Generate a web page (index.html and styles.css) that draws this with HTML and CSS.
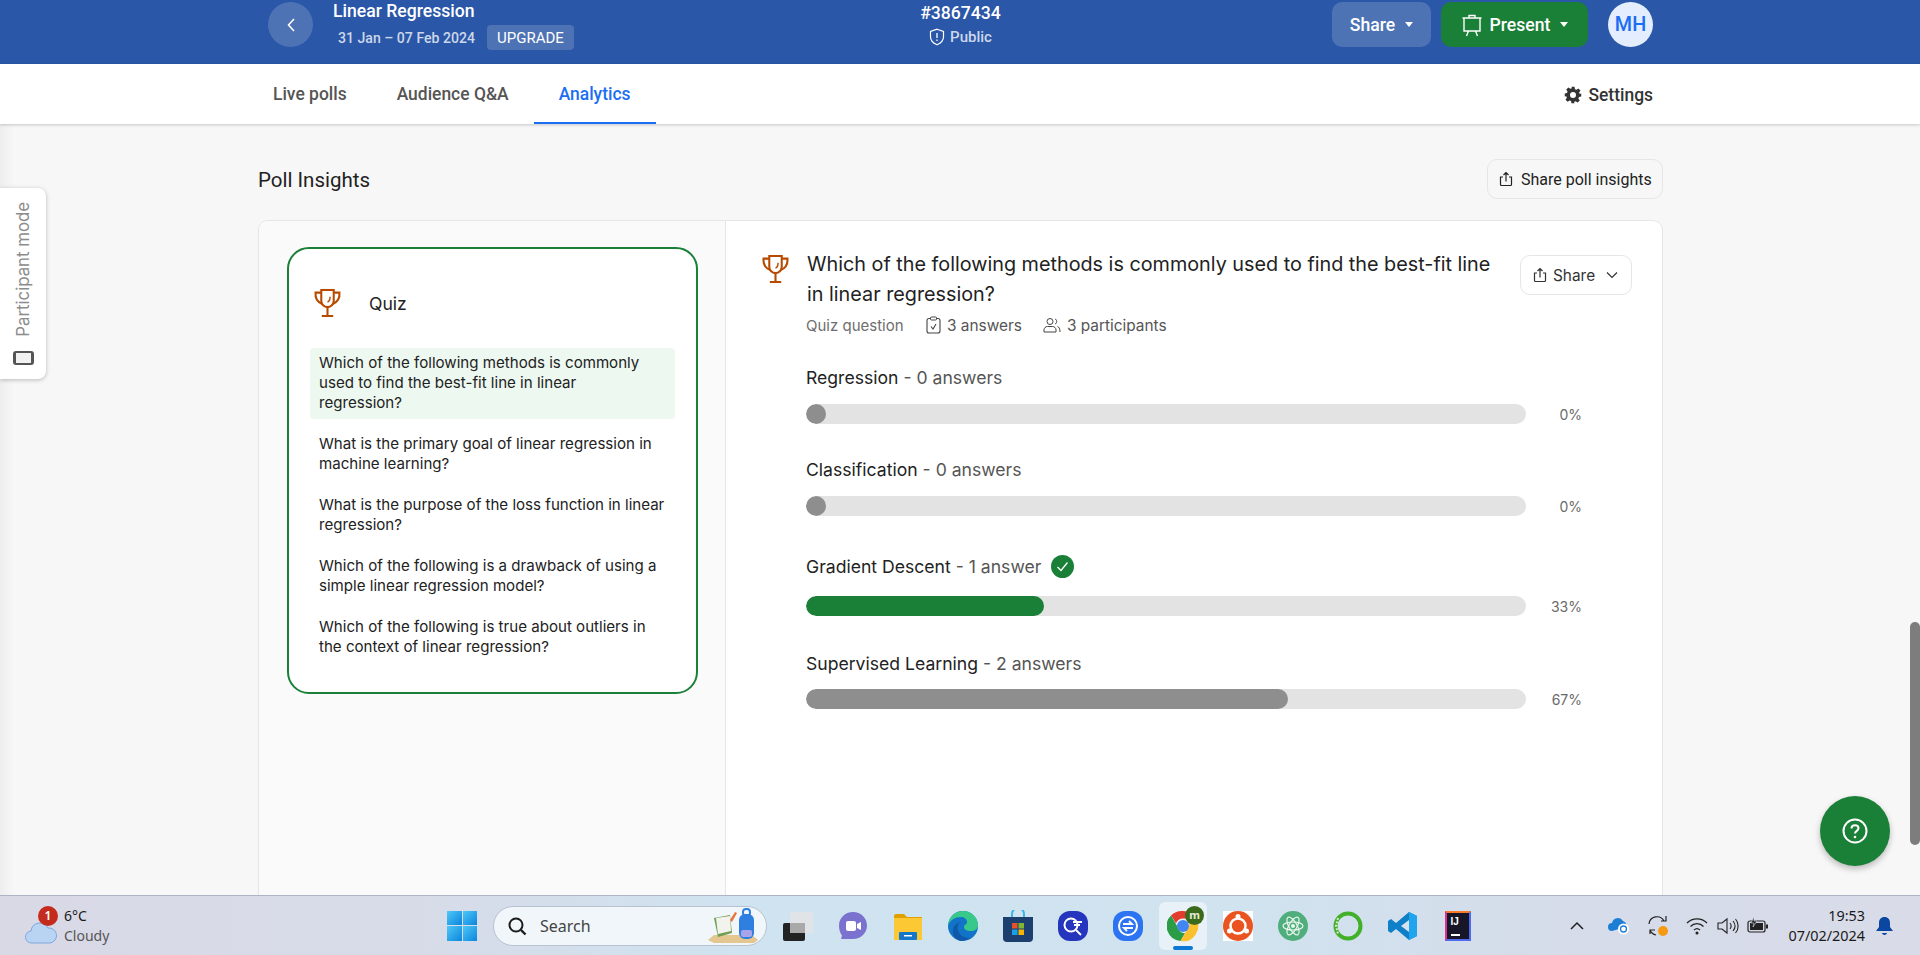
FILE: index.html
```html
<!DOCTYPE html>
<html lang="en">
<head>
  <meta charset="UTF-8">
  <meta name="viewport" content="width=device-width, initial-scale=1.0">
  <title>Linear Regression - Analytics</title>
  <link rel="stylesheet" href="styles.css">
</head>
<body>

  <!-- Icons used more than once -->
  <svg class="sprites" width="0" height="0">
    <symbol id="i-trophy" viewBox="3 2.500 26 27">
      <path d="M10 3.500h12V14a6 6 0 0 1-12 0z" fill="none" stroke="currentColor" stroke-width="2"/>
      <path d="M10 6H4.500c-.5 5 1.500 9 6.500 11M22 6h5.500c.5 5-1.500 9-6.500 11" fill="none" stroke="currentColor" stroke-width="2"/>
      <path d="M16 20v8M10.500 28.500h11" fill="none" stroke="currentColor" stroke-width="2"/>
      <path d="M18.500 10c0 3-.8 4.500-2.500 5" fill="none" stroke="currentColor" stroke-width="1.400"/>
    </symbol>
    <symbol id="i-share" viewBox="0 0 16 16">
      <path d="M5 6H2.500v7.500a1 1 0 0 0 1 1h9a1 1 0 0 0 1-1V6H11M8 10.500V1.500M5.500 4 8 1.500 10.500 4" fill="none" stroke="currentColor" stroke-width="1.200"/>
    </symbol>
  </svg>

  <!-- Top bar -->
  <header class="topbar">
    <div class="topbar-left">
      <button class="back-btn">
        <svg width="12" height="18" viewBox="0 0 12 18"><path d="M9 3 3.500 9 9 15" fill="none" stroke="#fff" stroke-width="1.600"/></svg>
      </button>
      <div class="event-info">
        <div class="event-title">Linear Regression</div>
        <div class="event-dates">
          <span>31 Jan – 07 Feb 2024</span>
          <span class="upgrade">UPGRADE</span>
        </div>
      </div>
    </div>
    <div class="topbar-center">
      <div class="event-code">#3867434</div>
      <div class="event-public">
        <svg width="16" height="18" viewBox="0 0 16 18"><path d="M8 1.200 14.500 3.500V9c0 3.500-2.500 6-6.500 7.800C4 15 1.500 12.500 1.500 9V3.500z" fill="none" stroke="#fff" stroke-width="1.200"/><path d="M8 5v5M8 11.500v1.500" stroke="#fff" stroke-width="1.300"/></svg>
        <span>Public</span>
      </div>
    </div>
    <div class="topbar-right">
      <button class="btn-share">Share <i class="caret"></i></button>
      <button class="btn-present">
        <svg width="22" height="24" viewBox="0 0 22 24"><path d="M3 5h16v13H3zM8 5V2.500h6V5M7.500 18 5.500 23M14.500 18l2 5M1.500 5h19" fill="none" stroke="#fff" stroke-width="1.400"/></svg>
        Present <i class="caret"></i>
      </button>
      <div class="avatar">MH</div>
    </div>
  </header>

  <!-- Tabs -->
  <nav class="tabs">
    <a class="tab">Live polls</a>
    <a class="tab">Audience Q&amp;A</a>
    <a class="tab active">Analytics</a>
    <a class="settings">
      <svg width="18" height="18" viewBox="0 0 24 24"><path fill="#333" fill-rule="evenodd" d="M10 1h4l.6 3.200 1.900.8 2.700-1.800 2.800 2.800-1.800 2.700.8 1.900L23 10v4l-3 .6-.8 1.900 1.800 2.700-2.800 2.800-2.700-1.800-1.900.8L13.900 23h-4l-.5-3-1.900-.8-2.700 1.800L2 18.200l1.800-2.700-.8-1.900L1 14v-4l3-.6.8-1.900L3 4.800 5.800 2l2.700 1.800 1.900-.8zM12 8a4 4 0 1 0 0 8 4 4 0 0 0 0-8z"/></svg>
      Settings
    </a>
  </nav>

  <!-- Main content -->
  <main class="content">
    <div class="content-head">
      <h2>Poll Insights</h2>
      <button class="btn-outline btn-insights">
        <svg width="16" height="16"><use href="#i-share"/></svg>
        Share poll insights
      </button>
    </div>

    <div class="card">
      <aside class="side">
        <div class="quiz-box">
          <div class="quiz-head">
            <svg class="trophy" width="29" height="28"><use href="#i-trophy"/></svg>
            <span>Quiz</span>
          </div>
          <ul class="quiz-list">
            <li class="selected">Which of the following methods is commonly used to find the best-fit line in linear regression?</li>
            <li>What is the primary goal of linear regression in machine learning?</li>
            <li>What is the purpose of the loss function in linear regression?</li>
            <li>Which of the following is a drawback of using a simple linear regression model?</li>
            <li>Which of the following is true about outliers in the context of linear regression?</li>
          </ul>
        </div>
      </aside>

      <section class="detail">
        <div class="question-row">
          <svg class="trophy" width="29" height="28"><use href="#i-trophy"/></svg>
          <h3>Which of the following methods is commonly used to find the best-fit line in linear regression?</h3>
          <button class="btn-outline btn-share-small">
            <svg width="16" height="16"><use href="#i-share"/></svg>
            Share
            <svg width="12" height="8" viewBox="0 0 12 8"><path d="M1 1.500 6 6.500 11 1.500" fill="none" stroke="#333" stroke-width="1.200"/></svg>
          </button>
        </div>
        <div class="meta">
          <span class="meta-type">Quiz question</span>
          <span class="meta-item">
            <svg width="15" height="18" viewBox="0 0 15 18"><rect x="1" y="2.500" width="13" height="14.500" rx="2" fill="none" stroke="#444" stroke-width="1.100"/><rect x="4.500" y="1" width="6" height="3" rx="1" fill="#fff" stroke="#444"/><path d="M5 10.500 7 13l3-5" fill="none" stroke="#444" stroke-width="1.100"/></svg>
            3 answers
          </span>
          <span class="meta-item meta-people">
            <svg width="18" height="16" viewBox="0 0 18 16"><circle cx="7" cy="4.500" r="3" fill="none" stroke="#444"/><path d="M1 15v-2c0-2 1.500-3.500 3.500-3.500h5c2 0 3.500 1.500 3.500 3.500v2zM12 2c2 .3 2.500 4.500 0 5M14.500 9.500c1.500.5 2.500 2 2.500 5.500" fill="none" stroke="#444"/></svg>
            3 participants
          </span>
        </div>

        <div class="option">
          <div class="option-label"><span><b>Regression</b> - 0 answers</span></div>
          <div class="option-row">
            <div class="bar"><div class="fill fill-grey fill-zero"></div></div>
            <span class="pct">0%</span>
          </div>
        </div>
        <div class="option">
          <div class="option-label"><span><b>Classification</b> - 0 answers</span></div>
          <div class="option-row">
            <div class="bar"><div class="fill fill-grey fill-zero"></div></div>
            <span class="pct">0%</span>
          </div>
        </div>
        <div class="option option-correct">
          <div class="option-label">
            <span><b>Gradient Descent</b> - 1 answer</span>
            <svg class="check" width="23" height="23" viewBox="0 0 23 23"><circle cx="11.500" cy="11.500" r="11.500" fill="#1a7f37"/><path d="M6.500 12 10 15.500 16.500 7.500" fill="none" stroke="#fff" stroke-width="1.300"/></svg>
          </div>
          <div class="option-row">
            <div class="bar"><div class="fill fill-green" style="width: 33%"></div></div>
            <span class="pct">33%</span>
          </div>
        </div>
        <div class="option">
          <div class="option-label"><span><b>Supervised Learning</b> - 2 answers</span></div>
          <div class="option-row">
            <div class="bar"><div class="fill fill-grey" style="width: 67%"></div></div>
            <span class="pct">67%</span>
          </div>
        </div>
      </section>
    </div>
  </main>

  <!-- Floating bits -->
  <div class="participant-tab">
    <span>Participant mode</span>
    <i class="participant-icon"></i>
  </div>
  <button class="help-fab">
    <svg width="28" height="28" viewBox="0 0 28 28"><circle cx="14" cy="14" r="11.500" fill="none" stroke="#fff" stroke-width="2"/><path d="M10.500 11.500c0-2 1.500-3.200 3.500-3.200s3.500 1.200 3.500 3c0 2.700-3.500 2.500-3.500 5.200" fill="none" stroke="#fff" stroke-width="2"/><circle cx="14" cy="20" r="1.300" fill="#fff"/></svg>
  </button>
  <div class="scroll-thumb"></div>

  <!-- Windows taskbar -->
  <footer class="taskbar">
    <div class="weather">
      <div class="weather-icon">
        <svg width="32" height="28" viewBox="0 0 32 28"><path d="M7 27a6 6 0 0 1-1-12 9 9 0 0 1 17-3 7.500 7.500 0 0 1 2 15z" fill="#b9d3f2" stroke="#7fa6dc"/></svg>
        <span class="weather-badge">1</span>
      </div>
      <div class="weather-text">
        <div>6°C</div>
        <div class="weather-sub">Cloudy</div>
      </div>
    </div>

    <div class="start">
      <i></i><i></i><i></i><i></i>
    </div>

    <div class="task-search">
      <svg width="22" height="22" viewBox="0 0 22 22"><circle cx="10" cy="10" r="6.500" fill="none" stroke="#1c1c1c" stroke-width="2"/><path d="M15 15l4.500 4.500" stroke="#1c1c1c" stroke-width="2.400"/></svg>
      <span>Search</span>
      <svg class="search-art" width="54" height="36" viewBox="0 0 54 36">
        <path d="M2 32 8 27h38l6 5-4 3H8z" fill="#e4c690"/>
        <path d="M8 10 24 7l2 18-14 4z" fill="#6f9e52"/>
        <path d="M10 10 24 8l1 15-13 3z" fill="#f3f3ee"/>
        <path d="M24 12l5-8 2 1-5 9z" fill="#e8763a"/>
        <rect x="33" y="6" width="15" height="25" rx="6" fill="#2f7fe0"/>
        <rect x="37" y="1" width="7" height="7" rx="3" fill="none" stroke="#2f7fe0" stroke-width="2"/>
        <rect x="35" y="22" width="11" height="7" rx="2" fill="#a7a4ec"/>
      </svg>
    </div>

    <div class="pinned">
      <div class="pin">
        <svg width="32" height="30" viewBox="0 0 32 30"><rect x="1" y="12" width="22" height="18" rx="2" fill="#222"/><rect x="8" y="1" width="23" height="21" rx="2" fill="#e4e4e4" fill-opacity=".85"/><rect x="8" y="12" width="15" height="10" fill="#a9a9a9"/></svg>
      </div>
      <div class="pin">
        <svg width="30" height="30" viewBox="0 0 30 30"><path d="M15 1c8 0 14 6 14 13.500S23 28 15 28H3l1-3.500C2 22 1 18.500 1 14.500 1 7 7 1 15 1z" fill="#7b72d0"/><rect x="8" y="10" width="10" height="10" rx="2" fill="#fff"/><path d="M19 13l4-2v8l-4-2z" fill="#fff"/></svg>
      </div>
      <div class="pin">
        <svg width="30" height="30" viewBox="0 0 30 30"><path d="M1 5a2 2 0 0 1 2-2h8l3 3h15v4H1z" fill="#e0a100"/><path d="M1 7h28v22H1z" fill="#fcc934"/><rect x="6" y="21" width="18" height="8" rx="1" fill="#1477c9"/><rect x="11" y="24" width="8" height="1.500" fill="#fff"/></svg>
      </div>
      <div class="pin">
        <svg width="32" height="32" viewBox="0 0 32 32"><circle cx="16" cy="16" r="15" fill="#1273c8"/><path d="M1 16C2 6 9 1 16 1c9 0 15 7 15 14 0 4-3 6-7 6-5 0-7-2-7-4 0-3 3-2 3-5 0-3-3-5-6-5C8 7 3 10 1 16z" fill="#38c88a"/><path d="M14 31c-6-1-9-6-8-12 1-4 5-7 8-7-3 1-4 4-3 8 1 5 6 8 12 8-3 2-6 3-9 3z" fill="#0f5aa8"/></svg>
      </div>
      <div class="pin">
        <svg width="30" height="32" viewBox="0 0 30 32"><path d="M9 8V4a6 6 0 0 1 12 0v4" fill="none" stroke="#3ab4ee" stroke-width="2"/><path d="M0 7h30v21a4 4 0 0 1-4 4H4a4 4 0 0 1-4-4z" fill="#1d3f70"/><rect x="9" y="13" width="5.500" height="5.500" fill="#e8502a"/><rect x="15.500" y="13" width="5.500" height="5.500" fill="#7cb82f"/><rect x="9" y="19.500" width="5.500" height="5.500" fill="#1a9fe8"/><rect x="15.500" y="19.500" width="5.500" height="5.500" fill="#f4b400"/></svg>
      </div>
      <div class="pin">
        <div class="squircle squircle-indigo">
          <svg width="22" height="22" viewBox="0 0 22 22"><circle cx="9" cy="10" r="6.500" fill="none" stroke="#fff" stroke-width="2"/><path d="M14 15l5 5M11 7h9M12 10h6" stroke="#fff" stroke-width="1.800"/></svg>
        </div>
      </div>
      <div class="pin">
        <div class="squircle squircle-blue">
          <svg width="22" height="22" viewBox="0 0 22 22"><circle cx="11" cy="11" r="9" fill="none" stroke="#fff" stroke-width="2"/><path d="M6 9h9l-3-3M16 13H7l3 3" fill="none" stroke="#fff" stroke-width="1.800"/></svg>
        </div>
      </div>
      <div class="pin pin-active">
        <svg width="32" height="32" viewBox="0 0 32 32">
          <path d="M16 1a15 15 0 0 1 13 7.500H16a7.500 7.500 0 0 0-7 4.800L4 5.500A15 15 0 0 1 16 1z" fill="#e33b2e"/>
          <path d="M4 5.500l6.500 11.300a7.500 7.500 0 0 0 7.500 6.500L13.500 31A15 15 0 0 1 4 5.500z" fill="#2a9d46"/>
          <path d="M29 8.500A15 15 0 0 1 13.500 31l6.500-11.300a7.500 7.500 0 0 0 0-11.200z" fill="#fbc02d"/>
          <circle cx="16" cy="16" r="6" fill="#4285f4"/>
        </svg>
        <span class="chrome-badge">m</span>
        <i class="pin-indicator"></i>
      </div>
      <div class="pin">
        <svg width="30" height="30" viewBox="0 0 30 30"><rect width="30" height="30" fill="#fff"/><circle cx="15" cy="15" r="15" fill="#e95420"/><circle cx="15" cy="15" r="7.500" fill="none" stroke="#fff" stroke-width="2.500"/><circle cx="15" cy="5.500" r="2.500" fill="#fff"/><circle cx="6.500" cy="20" r="2.500" fill="#fff"/><circle cx="23.500" cy="20" r="2.500" fill="#fff"/></svg>
      </div>
      <div class="pin">
        <svg width="30" height="30" viewBox="0 0 30 30"><circle cx="15" cy="15" r="15" fill="#4fae7b"/><g fill="none" stroke="#eaf6ee" stroke-width="1.200"><ellipse cx="15" cy="15" rx="10" ry="4" transform="rotate(60 15 15)"/><ellipse cx="15" cy="15" rx="10" ry="4" transform="rotate(-60 15 15)"/><ellipse cx="15" cy="15" rx="10" ry="4"/></g><circle cx="15" cy="15" r="2" fill="#eaf6ee"/></svg>
      </div>
      <div class="pin">
        <svg width="30" height="30" viewBox="0 0 30 30"><circle cx="15" cy="15" r="12.500" fill="none" stroke="#43b02a" stroke-width="4"/><path d="M5 7 3 15l2 8" fill="none" stroke="#d2e8cb" stroke-width="2" stroke-dasharray="2 1.500"/></svg>
      </div>
      <div class="pin">
        <svg width="30" height="30" viewBox="0 0 30 30"><path d="M21 1 29 5v20l-8 4L8 18l-5 4-3-2V10l3-2 5 4z" fill="#0f80c8"/><path d="M21 1 29 5v20l-8 4z" fill="#20a4ee"/><path d="M21 9 13 15l8 6z" fill="#d4e3ef"/></svg>
      </div>
      <div class="pin">
        <div class="ij-logo"><span class="ij-text">IJ</span><i></i></div>
      </div>
    </div>

    <div class="tray">
      <svg class="tray-chevron" width="16" height="10" viewBox="0 0 16 10"><path d="M2 8l6-6 6 6" fill="none" stroke="#222" stroke-width="1.500"/></svg>
      <svg class="tray-cloud" width="22" height="18" viewBox="0 0 22 18"><path d="M4 14a4 4 0 0 1 0-8 6 6 0 0 1 11-2 5 5 0 0 1 3 6z" fill="#1d7ed6"/><circle cx="15.500" cy="12" r="5.500" fill="#fff"/><circle cx="15.500" cy="12" r="3" fill="none" stroke="#1d7ed6" stroke-width="1.300"/></svg>
      <svg class="tray-sync" width="22" height="22" viewBox="0 0 22 22"><path d="M2 9a8 8 0 0 1 15-3M19 1v5h-5M3 19v-4h5M3 15a8 8 0 0 0 6 5" fill="none" stroke="#222" stroke-width="1.200"/><circle cx="16" cy="16" r="5" fill="#f59a12"/></svg>
      <svg class="tray-wifi" width="22" height="18" viewBox="0 0 22 18"><path d="M1 6a14 14 0 0 1 20 0M4.500 9.500a9 9 0 0 1 13 0M8 13a4.500 4.500 0 0 1 6 0" fill="none" stroke="#222" stroke-width="1.300"/><circle cx="11" cy="16" r="1.500" fill="#222"/></svg>
      <svg class="tray-sound" width="22" height="18" viewBox="0 0 22 18"><path d="M1 6h4l5-4v14l-5-4H1zM13 6c1.500 2 1.500 4 0 6M16 4c2.500 3 2.500 7 0 10M18.500 2c3.500 4 3.500 10 0 14" fill="none" stroke="#222" stroke-width="1.100"/></svg>
      <svg class="tray-battery" width="22" height="18" viewBox="0 0 22 18"><rect x="1" y="4" width="17" height="11" rx="2" fill="none" stroke="#222" stroke-width="1.200"/><rect x="3" y="6" width="13" height="7" fill="#222"/><rect x="19" y="7.500" width="2" height="4" fill="#222"/><path d="M7 0 4 6h3l-1 4 4-6H7z" fill="#222" stroke="#d9dce8" stroke-width=".6"/></svg>
      <div class="clock">
        <div>19:53</div>
        <div>07/02/2024</div>
      </div>
      <svg class="tray-bell" width="17" height="20" viewBox="0 0 17 20"><path d="M8.500 1C12 1 14 3.500 14 7v4l3 4H0l3-4V7c0-3.500 2-6 5.500-6z" fill="#0b46a0"/><path d="M6 17h5c-.5 2.500-4.500 2.500-5 0z" fill="#0b46a0"/></svg>
    </div>
  </footer>

</body>
</html>
```

FILE: styles.css
```css
* {
  box-sizing: border-box;
}

html, body {
  height: 100%;
}

body {
  margin: 0;
  height: 955px;
  overflow: hidden;
  display: flex;
  flex-direction: column;
  font-family: Inter, "Noto Sans", sans-serif;
  background-color: #f7f7f7;
  color: #222;
}

button {
  font-family: inherit;
  border: none;
  cursor: pointer;
}

.sprites {
  position: absolute;
}

/* Top bar */
.topbar {
  flex: none;
  height: 64px;
  padding: 2px 267px 0 268px;
  display: grid;
  grid-template-columns: 1fr auto 1fr;
  align-items: start;
  background-color: #2a57a7;
  color: #fff;
  font-family: Roboto, sans-serif;
}

.topbar-left {
  display: flex;
}

.back-btn {
  width: 45px;
  height: 45px;
  border-radius: 50%;
  background-color: rgba(255, 255, 255, 0.17);
  display: flex;
  align-items: center;
  justify-content: center;
}

.event-info {
  margin-left: 20px;
}

.event-title {
  font-size: 17.600px;
  font-weight: 500;
  line-height: 18px;
}

.event-dates {
  display: flex;
  align-items: center;
  gap: 12px;
  margin-top: 5px;
  margin-left: 5px;
  font-size: 14.100px;
  font-weight: 500;
  color: #cdd7ea;
}

.upgrade {
  height: 25px;
  padding: 0 10px;
  display: flex;
  align-items: center;
  border-radius: 4px;
  background-color: rgba(255, 255, 255, 0.17);
  color: #fff;
  font-size: 15px;
  font-weight: 400;
}

.topbar-center {
  text-align: center;
}

.event-code {
  font-size: 17.600px;
  font-weight: 500;
  line-height: 20px;
  margin-top: 1px;
}

.event-public {
  display: flex;
  align-items: center;
  justify-content: center;
  gap: 5px;
  margin-top: 5px;
  font-size: 15px;
  font-weight: 500;
  color: #cdd7ea;
}

.topbar-right {
  display: flex;
  justify-content: flex-end;
}

.btn-share, .btn-present {
  height: 45px;
  border-radius: 10px;
  color: #fff;
  font-size: 17.600px;
  font-weight: 500;
  display: flex;
  align-items: center;
  justify-content: center;
}

.btn-share {
  width: 99px;
  gap: 7px;
  background-color: rgba(255, 255, 255, 0.17);
}

.btn-present {
  width: 147px;
  gap: 7px;
  margin-left: 10px;
  background-color: #1a7f37;
}

.caret {
  width: 0;
  height: 0;
  margin-left: 3px;
  border-left: 4px solid transparent;
  border-right: 4px solid transparent;
  border-top: 5px solid #fff;
}

.avatar {
  width: 45px;
  height: 45px;
  margin-left: 20px;
  border-radius: 50%;
  display: flex;
  align-items: center;
  justify-content: center;
  background-color: #e3edfd;
  color: #1b6ef3;
  font-size: 19.800px;
  font-weight: 500;
}

/* Tabs */
.tabs {
  flex: none;
  height: 60px;
  padding: 0 267px 0 248px;
  display: flex;
  background-color: #fff;
  box-shadow: 0 1px 3px rgba(0, 0, 0, 0.2);
  font-family: Roboto, sans-serif;
  font-size: 17.450px;
  font-weight: 500;
  color: #555;
  position: relative;
}

.tab {
  padding: 2px 25px 0;
  display: flex;
  align-items: center;
  border-bottom: 2px solid transparent;
}

.tab.active {
  color: #1b6ef3;
  border-bottom-color: #1b6ef3;
}

.settings {
  margin-left: auto;
  display: flex;
  align-items: center;
  gap: 6px;
  color: #333;
  padding-top: 1px;
}

/* Main */
.content {
  flex: 1;
  min-height: 0;
  padding: 0 257px 0 258px;
  overflow: hidden;
  background: linear-gradient(90deg, #eeeeee, #f7f7f7 14px);
}

.content-head {
  height: 96px;
  padding-top: 35px;
  display: flex;
  justify-content: space-between;
  align-items: flex-start;
}

.content-head h2 {
  margin: 0;
  font-family: Roboto, sans-serif;
  font-size: 20.500px;
  font-weight: 400;
  line-height: 42px;
  color: #222;
}

.btn-outline {
  display: flex;
  align-items: center;
  background-color: #fff;
  border: 1px solid #e6e6e6;
  border-radius: 10px;
  color: #333;
  font-size: 15.400px;
}

.btn-insights {
  height: 40px;
  width: 176px;
  gap: 7px;
  padding-left: 10px;
  background-color: #f7f7f7;
  font-family: Roboto, sans-serif;
  font-size: 16px;
  font-weight: 400;
  color: #222;
}

.card {
  display: flex;
  height: 700px;
  background-color: #fff;
  border: 1px solid #e6e6e6;
  border-radius: 10px;
}

.side {
  flex: none;
  width: 467px;
  padding: 26px 28px;
  background-color: #fafafa;
  border-right: 1px solid #e6e6e6;
  border-radius: 10px 0 0 10px;
}

.quiz-box {
  width: 411px;
  height: 447px;
  padding: 36px 21px 0;
  background-color: #fff;
  border: 2px solid #1a7f37;
  border-radius: 22px;
}

.quiz-head {
  display: flex;
  align-items: center;
  gap: 27px;
  height: 36px;
  margin-left: 3px;
  font-size: 17.600px;
  color: #222;
}

.trophy {
  flex: none;
  color: #b84a00;
}

.quiz-list {
  list-style: none;
  margin: 27px 0 0;
  padding: 0;
  display: flex;
  flex-direction: column;
  gap: 10px;
  font-size: 15.100px;
  line-height: 20px;
  color: #222;
}

.quiz-list li {
  padding: 5px 9px 6px;
  border-radius: 4px;
}

.quiz-list li.selected {
  padding-right: 14px;
  background-color: #edf8f0;
}

/* Question detail */
.detail {
  flex: 1;
  padding: 34px 30px 0 34px;
}

.question-row {
  display: flex;
  align-items: flex-start;
  gap: 17px;
}

.question-row .trophy {
  margin-left: 1px;
}

.question-row h3 {
  margin: -6px 0 0;
  flex: 1;
  font-size: 19.800px;
  font-weight: 400;
  line-height: 30px;
  color: #222;
}

.btn-share-small {
  flex: none;
  width: 112px;
  height: 40px;
  margin-left: 5px;
  padding-left: 11px;
  gap: 5px;
  justify-content: flex-start;
}

.btn-share-small svg:last-child {
  margin-left: 6px;
}

.meta {
  display: flex;
  align-items: center;
  margin: 6px 0 9px 46px;
  font-size: 15.400px;
  color: #555;
  height: 20px;
}

.meta-type {
  width: 120px;
  font-size: 15px;
  color: #6e6e6e;
}

.meta-item {
  display: flex;
  align-items: center;
  gap: 6px;
}

.meta-people {
  margin-left: 21px;
}

.option {
  margin: 0 0 0 46px;
  height: 92px;
  padding-top: 32px;
  width: 776px;
}

.option-correct {
  height: 101px;
  padding-top: 37px;
}

.option:last-child {
  padding-top: 33px;
}

.option-label {
  display: flex;
  align-items: center;
  height: 23px;
  margin-top: -10px;
  font-size: 17.600px;
  color: #555;
}

.option-label b {
  font-weight: 400;
  color: #222;
}

.check {
  margin-left: 10px;
}

.option-row {
  display: flex;
  align-items: center;
  margin-top: 15px;
}

.option-correct .option-row {
  margin-top: 18px;
}

.option:last-child .option-row {
  margin-top: 14px;
}

.bar {
  flex: none;
  width: 720px;
  height: 20px;
  border-radius: 10px;
  background-color: #e3e3e3;
  overflow: hidden;
}

.fill {
  height: 100%;
  border-radius: 10px;
}

.fill-green {
  background-color: #1a7f37;
}

.fill-grey {
  background-color: #8e8e8e;
}

.fill-zero {
  width: 20px;
}

.pct {
  flex: 1;
  text-align: right;
  font-size: 14px;
  color: #6a6a6a;
}

/* Floating bits */
.participant-tab {
  position: absolute;
  left: 0;
  top: 188px;
  width: 46px;
  height: 191px;
  padding: 14px 0 14px;
  display: flex;
  flex-direction: column;
  align-items: center;
  justify-content: space-between;
  background-color: #fff;
  border-radius: 0 8px 8px 0;
  box-shadow: 0 1px 4px rgba(0, 0, 0, 0.25);
}

.participant-tab span {
  writing-mode: vertical-rl;
  transform: rotate(180deg);
  font-family: Inter, sans-serif;
  font-size: 16.800px;
  color: #8c8c8c;
  white-space: nowrap;
}

.participant-icon {
  width: 21px;
  height: 14px;
  border: 2px solid #555;
  border-left-width: 3px;
  border-right-width: 3px;
  border-radius: 3px;
  background-color: #f2f2f2;
}

.help-fab {
  position: absolute;
  left: 1820px;
  top: 796px;
  width: 70px;
  height: 70px;
  border-radius: 50%;
  background-color: #1a7f37;
  box-shadow: 0 3px 6px rgba(0, 0, 0, 0.25);
  display: flex;
  align-items: center;
  justify-content: center;
}

.scroll-thumb {
  position: absolute;
  left: 1910px;
  top: 622px;
  width: 10px;
  height: 223px;
  border-radius: 5px;
  background-color: #7d7d7d;
}

/* Taskbar */
.taskbar {
  flex: none;
  position: relative;
  height: 60px;
  padding-left: 25px;
  display: flex;
  align-items: center;
  border-top: 1px solid #aeb4c3;
  background: linear-gradient(90deg, #d9d9e6 0%, #d7dbe8 22%, #cfe3f0 40%, #d0e3ef 65%, #d5dcea 80%, #d9dbe8 100%);
  font-family: "Noto Sans", sans-serif;
  font-size: 14px;
  color: #1a1a1a;
}

.weather {
  flex: none;
  width: 422px;
  display: flex;
  align-items: center;
}

.weather-icon {
  position: relative;
  width: 39px;
  height: 40px;
  padding-top: 10px;
}

.weather-badge {
  position: absolute;
  left: 13px;
  top: 0;
  width: 20px;
  height: 20px;
  border-radius: 50%;
  background-color: #c42b1c;
  color: #fff;
  font-size: 12px;
  font-weight: 600;
  display: flex;
  align-items: center;
  justify-content: center;
}

.weather-text {
  line-height: 20px;
}

.weather-sub {
  color: #555;
}

.start {
  flex: none;
  width: 30px;
  height: 30px;
  display: grid;
  grid-template-columns: 1fr 1fr;
  gap: 1px;
}

.start i {
  background: linear-gradient(135deg, #4fc8f8, #0a85dc);
}

.task-search {
  flex: none;
  position: relative;
  width: 274px;
  height: 40px;
  margin-left: 16px;
  padding-left: 12px;
  display: flex;
  align-items: center;
  gap: 12px;
  border: 1px solid #b8c2d2;
  border-radius: 20px;
  background-color: #f1f6fa;
  font-size: 16px;
  color: #444;
}

.search-art {
  position: absolute;
  right: 6px;
  bottom: 1px;
}

.pinned {
  flex: none;
  display: flex;
  margin-left: 3px;
}

.pin {
  position: relative;
  width: 55px;
  height: 48px;
  display: flex;
  align-items: center;
  justify-content: center;
}

.pin-active {
  width: 48px;
  margin: 0 3px 0 4px;
  border-radius: 6px;
  background-color: rgba(255, 255, 255, 0.5);
}

.chrome-badge {
  position: absolute;
  right: 3px;
  top: 4px;
  width: 19px;
  height: 19px;
  border-radius: 50%;
  background-color: #3a6b1d;
  color: #e4ecd8;
  font-size: 11px;
  font-weight: 700;
  line-height: 17px;
  text-align: center;
}

.pin-indicator {
  position: absolute;
  left: 14px;
  bottom: 0;
  width: 20px;
  height: 4px;
  border-radius: 2px;
  background-color: #0a78d4;
}

.squircle {
  width: 30px;
  height: 30px;
  border-radius: 12px;
  display: flex;
  align-items: center;
  justify-content: center;
}

.squircle-indigo {
  background-color: #2535bd;
}

.squircle-blue {
  background-color: #2c74f2;
}

.ij-logo {
  position: relative;
  width: 26px;
  height: 30px;
  padding: 3px 4px;
  border: 2px solid;
  border-color: #fa7a2b #4f6cf0 #4f6cf0 #d5338f;
  background-color: #161628;
  color: #fff;
  font-family: "Liberation Sans", sans-serif;
  font-size: 10px;
  font-weight: 700;
  line-height: 11px;
}

.ij-logo i {
  position: absolute;
  left: 4px;
  bottom: 3px;
  width: 9px;
  height: 2px;
  background-color: #fff;
}

.tray {
  flex: 1;
  display: flex;
  align-items: center;
  padding-right: 27px;
  justify-content: flex-end;
}

.tray svg {
  flex: none;
}

.tray-chevron {
  margin-right: 23px;
}

.tray-cloud, .tray-sync {
  margin-right: 17px;
}

.tray-wifi {
  margin-right: 9px;
}

.tray-sound {
  margin-right: 8px;
}

.tray-battery {
  margin-right: 19px;
}

.clock {
  text-align: right;
  line-height: 20px;
  font-size: 14.400px;
}

.tray-bell {
  margin-left: 11px;
}
```
